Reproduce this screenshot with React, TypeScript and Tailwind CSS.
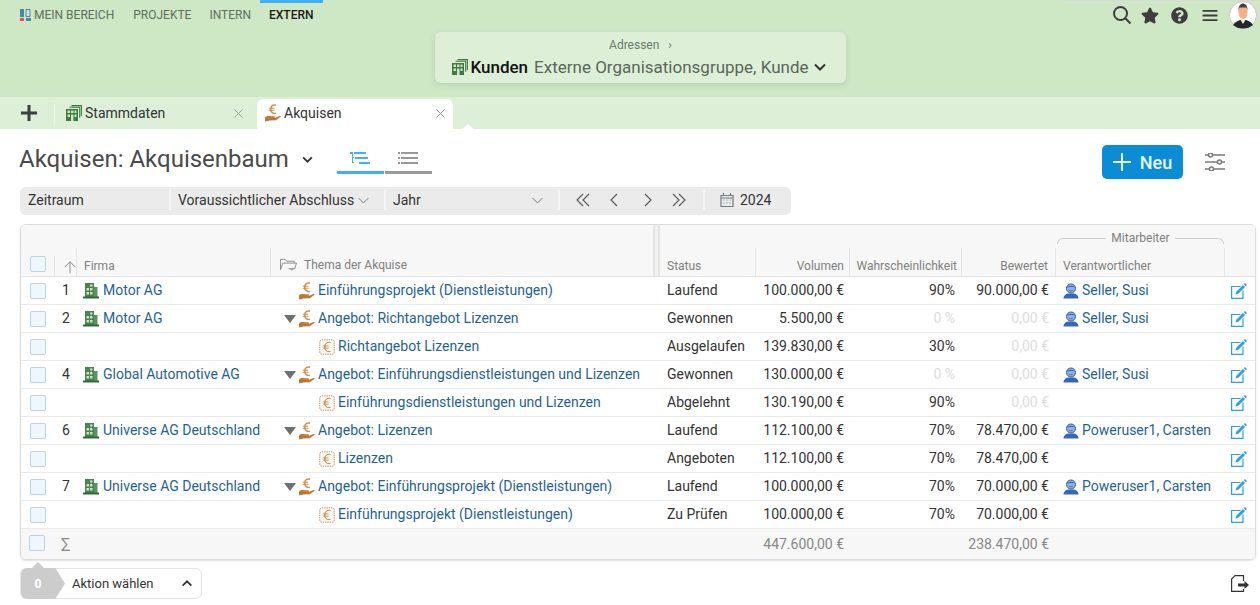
import { FaStar, FaQuestionCircle } from "react-icons/fa";

const gridCols = "grid-cols-[33px_22px_194px_382px_7px_96px_94px_112px_94px_169px_31px]";
const headCols = "grid-cols-[34px_22px_194px_382px_7px_96px_94px_112px_94px_169px_30px]";

type Row = {
  no?: string;
  firma?: string;
  thema: string;
  level: 0 | 1 | 2;
  status: string;
  vol: string;
  prob: string;
  score: string;
  owner?: string;
  muted?: boolean;
  mutedScore?: boolean;
};

const rows: Row[] = [
  { no: "1", firma: "Motor AG", thema: "Einführungsprojekt (Dienstleistungen)", level: 0, status: "Laufend", vol: "100.000,00 €", prob: "90%", score: "90.000,00 €", owner: "Seller, Susi" },
  { no: "2", firma: "Motor AG", thema: "Angebot: Richtangebot Lizenzen", level: 1, status: "Gewonnen", vol: "5.500,00 €", prob: "0 %", score: "0,00 €", owner: "Seller, Susi", muted: true, mutedScore: true },
  { thema: "Richtangebot Lizenzen", level: 2, status: "Ausgelaufen", vol: "139.830,00 €", prob: "30%", score: "0,00 €", mutedScore: true },
  { no: "4", firma: "Global Automotive AG", thema: "Angebot: Einführungsdienstleistungen und Lizenzen", level: 1, status: "Gewonnen", vol: "130.000,00 €", prob: "0 %", score: "0,00 €", owner: "Seller, Susi", muted: true, mutedScore: true },
  { thema: "Einführungsdienstleistungen und Lizenzen", level: 2, status: "Abgelehnt", vol: "130.190,00 €", prob: "90%", score: "0,00 €", mutedScore: true },
  { no: "6", firma: "Universe AG Deutschland", thema: "Angebot: Lizenzen", level: 1, status: "Laufend", vol: "112.100,00 €", prob: "70%", score: "78.470,00 €", owner: "Poweruser1, Carsten" },
  { thema: "Lizenzen", level: 2, status: "Angeboten", vol: "112.100,00 €", prob: "70%", score: "78.470,00 €" },
  { no: "7", firma: "Universe AG Deutschland", thema: "Angebot: Einführungsprojekt (Dienstleistungen)", level: 1, status: "Laufend", vol: "100.000,00 €", prob: "70%", score: "70.000,00 €", owner: "Poweruser1, Carsten" },
  { thema: "Einführungsprojekt (Dienstleistungen)", level: 2, status: "Zu Prüfen", vol: "100.000,00 €", prob: "70%", score: "70.000,00 €" },
];

function Check() {
  return <span className="block h-[16px] w-[16px] rounded-[2px] border border-[#b9d3e6] bg-[#eef7fd]" />;
}

function StackIcon({ className }: { className?: string }) {
  return (
    <svg viewBox="0 0 16 16" className={className}>
      <path d="M5.500.6H15.400V11M3.500 2.300H13.700V12.800" fill="none" stroke="#3f7a3f" strokeWidth="1.100" />
      <rect x="0" y="4" width="12" height="12" fill="#3f7a3f" />
      <path d="M1.500 5.500h2.500v2.500H1.500zM5 5.500h2.500v2.500H5zM8.500 5.500h2v2.500h-2zM1.500 9.500h2.500v2.500H1.500zM8.500 9.500h2v2.500h-2zM5 9.500h2.500v6.500H5z" fill="#cfe5c8" />
    </svg>
  );
}

function BuildingIcon() {
  return (
    <svg viewBox="0 0 16 16" className="h-[16px] w-[16px] shrink-0">
      <path d="M2 0h9v14H2z" fill="#4b8250" />
      <path d="M11 4h3.500v10H11z" fill="#5c9460" />
      <path d="M0 13.500h16V15.500H0z" fill="#2f6a35" />
      <path d="M3.500 5h2.500v2.500H3.500zM7 5h2.500v2.500H7zM3.500 9h2.500v2.500H3.500zM7 9h2.500v2.500H7zM7 1.500h2.500v2H7z" fill="#cfe2c8" />
    </svg>
  );
}

function HandEuroIcon({ className }: { className?: string }) {
  return (
    <svg viewBox="0 0 16 18" className={className ?? "h-[18px] w-[16px] shrink-0"}>
      <path d="M11 1.200C8 .300 5.800 2 5.800 5.200s2.200 4.900 5.200 4" fill="none" stroke="#d0914f" strokeWidth="1.600" />
      <path d="M3.800 4.200h5.700M3.800 6.300h5.700" stroke="#d0914f" strokeWidth="1.100" />
      <path d="M0 13.300c1.800-1.500 3.800-1.700 5.800-1.100h3.500c1.100 0 1.100 1.400 0 1.400H6.500l3.800.2 4.600-2.100c.8-.1 1.200.5.600 1.100l-4.500 3.400-7 .2-1.500.9H0z" fill="#b9793c" />
    </svg>
  );
}

function CertIcon() {
  return (
    <svg viewBox="0 0 16 16" className="h-[16px] w-[16px] shrink-0">
      <rect x="0.800" y="0.800" width="14.400" height="14.400" rx="2" fill="#fdf8f2" stroke="#c08a58" strokeWidth="1" strokeDasharray="1.400 .9" />
      <path d="M11.500 3.600C8 2.600 5.800 4.800 5.800 8s2.200 5.400 5.700 4.400" fill="none" stroke="#b9793c" strokeWidth="1" />
      <path d="M3.800 6.900h5.700M3.800 9.100h5.700" stroke="#b9793c" strokeWidth=".8" />
    </svg>
  );
}

function PersonIcon() {
  return (
    <svg viewBox="0 0 16 16" className="h-[16px] w-[16px] shrink-0">
      <path d="M.5 15.500c0-3 2.500-4.500 4.500-5h6c2 .5 4.500 2 4.500 5z" fill="#3668b4" />
      <circle cx="8" cy="5.500" r="4.500" fill="#8fb2e6" stroke="#2f5fa8" strokeWidth="1" />
      <path d="M3.500 4.500C5 2.500 11 2.500 12.500 4.500 11 3.800 5 3.800 3.500 4.500z" fill="#2f5fa8" />
      <path d="M6 7c1 1 3 1 4 0" stroke="#2f5fa8" strokeWidth=".7" fill="none" />
    </svg>
  );
}

function EditIcon() {
  return (
    <svg viewBox="0 0 16 16" className="h-[16px] w-[16px]">
      <path d="M9.500 3.500H.6V15.400H12V7.500" fill="none" stroke="#2f9fe8" strokeWidth="1.200" />
      <path d="M4.500 11.500l.8-2.800 6.700-6.700 2 2-6.700 6.700z" fill="#2f9fe8" />
      <path d="M12.800 1.200L14 0l2 2-1.200 1.200z" fill="#2f9fe8" />
    </svg>
  );
}

function Thin({ d, className }: { d: string; className?: string }) {
  return (
    <svg viewBox="0 0 16 16" className={className ?? "h-[16px] w-[16px]"} fill="none" stroke="currentColor" strokeWidth="1.100">
      <path d={d} />
    </svg>
  );
}

function Chevron({ className }: { className?: string }) {
  return (
    <svg viewBox="0 0 12 8" className={className ?? "h-[8px] w-[12px]"} fill="none" stroke="currentColor" strokeWidth="2">
      <path d="M1 1.500l5 5 5-5" />
    </svg>
  );
}

function Avatar() {
  return (
    <svg viewBox="0 0 28 28" className="h-[28px] w-[28px]">
      <circle cx="14" cy="14" r="13.500" fill="#fff" stroke="#c9c9c9" />
      <path d="M4 24c2-3 5-4 7-5h6c3 1 5 2 7 5-3 2.500-6 3.500-10 3.500S7 26.500 4 24z" fill="#23262b" />
      <path d="M11.500 19l2.500 4 2.500-4z" fill="#e4e4e4" />
      <path d="M9.500 8c0-3 2-5 4.500-5s4.500 2 4.500 5v4c0 3-2.500 6-4.500 6s-4.500-3-4.500-6z" fill="#f4b183" />
      <path d="M9.500 9c0-4 2-6.500 4.500-6.500s4.500 2.500 4.500 6.500l-1-2.500h-7z" fill="#3d4148" />
    </svg>
  );
}

function Header({ label, right, className }: { label: string; right?: boolean; className?: string }) {
  return (
    <div className={`flex h-[28px] items-center self-end border-r border-[#e6e6e6] pt-[8px] text-[12px] text-[#808080] ${right ? "justify-end pr-[4px]" : "pl-[7px]"} ${className ?? ""}`}>
      {label}
    </div>
  );
}

function TableRow({ row }: { row: Row }) {
  return (
    <div className={`grid h-[28px] ${gridCols} items-center border-b border-[#ebebeb] text-[14px] text-[#333]`}>
      <div className="pl-[9px]">
        <Check />
      </div>
      <div className="pl-[8px]">{row.no}</div>
      <div className="flex items-center gap-[2px] pl-[7px] text-[#1f6394]">
        {row.firma && <BuildingIcon />}
        {row.firma && <span className="whitespace-nowrap pl-[2px]">{row.firma}</span>}
      </div>
      <div className={`flex items-center text-[#1f6394] ${row.level === 2 ? "pl-[49px]" : row.level === 1 ? "pl-[14px]" : "pl-[29px]"}`}>
        {row.level === 1 && <span className="mr-[3px] h-0 w-0 border-x-[6px] border-t-[8px] border-x-transparent border-t-[#707070]" />}
        {row.level === 2 ? <CertIcon /> : <HandEuroIcon />}
        <span className="whitespace-nowrap pl-[3px]">{row.thema}</span>
      </div>
      <div />
      <div className="pl-[8px]">{row.status}</div>
      <div className="pr-[5px] text-right">{row.vol}</div>
      <div className={`pr-[6px] text-right ${row.muted ? "text-[#dcdcdc]" : ""}`}>{row.prob}</div>
      <div className={`pr-[6px] text-right ${row.mutedScore ? "text-[#dcdcdc]" : ""}`}>{row.score}</div>
      <div className="flex items-center pl-[8px] text-[#1f6394]">
        {row.owner && <PersonIcon />}
        {row.owner && <span className="whitespace-nowrap pl-[3px]">{row.owner}</span>}
      </div>
      <div className="flex justify-end pr-[8px]">
        <EditIcon />
      </div>
    </div>
  );
}

export default function App() {
  return (
    <div className="relative h-[605px] w-[1260px] overflow-hidden bg-white font-['Roboto',sans-serif]">
      <div className="absolute right-0 top-0 h-px w-[197px] bg-[#d9d9d9]" />
      <header className="h-[97px] bg-[#cee8c6]">
        <div className="flex h-[30px] items-start">
          <nav className="flex pl-[11px] text-[12px] uppercase text-[#5f6f5f]">
            <a className="mr-px flex items-center gap-[3px] px-[9px] pb-[7px] pt-[6px]">
              <svg viewBox="0 0 11 12" className="h-[12px] w-[11px]">
                <path d="M0 0h4v8H0z" fill="#4a86a8" />
                <path d="M0 9h4v3H0z" fill="#e0564e" />
                <path d="M6 .5h4v7H6z" fill="none" stroke="#4a86a8" />
                <path d="M6 9h5v3H6z" fill="#4a86a8" />
              </svg>
              Mein Bereich
            </a>
            <a className="px-[9px] pb-[7px] pt-[6px]">Projekte</a>
            <a className="px-[9px] pb-[7px] pt-[6px]">Intern</a>
            <a className="border-t-[3px] border-[#3fb0f5] px-[9px] pb-[7px] pt-[3px] font-medium text-[#1a1a1a]">Extern</a>
          </nav>
          <div className="ml-auto flex items-center pr-[3px] pt-px text-[#3d3d3d]">
            <svg viewBox="0 0 20 20" className="h-[20px] w-[20px]" fill="none" stroke="currentColor" strokeWidth="2">
              <circle cx="8.500" cy="8.500" r="6.500" />
              <path d="M13 13l5.500 5.500" />
            </svg>
            <FaStar className="ml-[9px] h-[17px] w-[18px]" />
            <FaQuestionCircle className="ml-[12px] h-[17px] w-[17px]" />
            <svg viewBox="0 0 16 14" className="ml-[14px] h-[13px] w-[16px]" fill="currentColor">
              <path d="M0 1h16v2H0zM0 6h16v2H0zM0 11h16v2H0z" />
            </svg>
            <div className="ml-[11px]">
              <Avatar />
            </div>
          </div>
        </div>
        <div className="ml-[435px] mt-[2px] h-[51px] w-[411px] rounded-[6px] bg-[#deefd8] pt-[6px] shadow-[0_2px_6px_rgba(90,130,90,0.2)]">
          <div className="flex justify-center gap-[9px] text-[12px] leading-[14px] text-[#6a7a6a]">
            <span>Adressen</span>
            <span>›</span>
          </div>
          <div className="mt-[4px] flex items-center justify-center pr-[3px] text-[17px] leading-[22px] text-[#5a665a]">
            <StackIcon className="mr-[2px] h-[16px] w-[16px]" />
            <span className="font-medium text-[#111]">Kunden</span>
            <span className="ml-[6px]">Externe Organisationsgruppe, Kunde</span>
            <Chevron className="ml-[5px] h-[8px] w-[12px] text-[#333]" />
          </div>
        </div>
      </header>

      <div className="flex h-[32px] items-end bg-[#deefd8]">
        <div className="flex h-[32px] w-[54px] items-center justify-center pl-[3px] text-[#3d3d3d]">
          <svg viewBox="0 0 16 16" className="h-[16px] w-[16px]" fill="currentColor">
            <path d="M6.500 0h3v6.500H16v3H9.500V16h-3V9.500H0v-3h6.500z" />
          </svg>
        </div>
        <div className="mb-[4px] h-[24px] w-px bg-[#eaf5e6]" />
        <div className="flex h-[30px] w-[202px] items-center pb-[2px] pl-[11px] pr-[12px] text-[14px] text-[#333]">
          <StackIcon className="h-[16px] w-[16px]" />
          <span className="pl-[3px]">Stammdaten</span>
          <Thin d="M3 3l10 10M13 3L3 13" className="ml-auto h-[13px] w-[13px] text-[#999]" />
        </div>
        <div className="flex h-[30px] w-[196px] items-center rounded-t-[6px] bg-white pb-[2px] pl-[8px] pr-[6px] text-[14px] text-[#333]">
          <HandEuroIcon className="h-[18px] w-[16px]" />
          <span className="pl-[3px]">Akquisen</span>
          <Thin d="M3 3l10 10M13 3L3 13" className="ml-auto h-[13px] w-[13px] text-[#888]" />
        </div>
        <div className="mb-0 ml-[9px] h-0 w-0 border-x-[6px] border-b-[5px] border-x-transparent border-b-white" />
      </div>

      <div className="flex h-[58px] items-start pl-[19px] pr-[35px]">
        <div className="flex items-center pt-[15px] text-[24px] leading-[30px] text-[#4a4a4a]">
          <h1>Akquisen: Akquisenbaum</h1>
          <Chevron className="ml-[13px] h-[7px] w-[11px] text-[#333]" />
        </div>
        <div className="ml-[24px] flex gap-px pt-[16px]">
          <div className="flex h-[29px] w-[47px] items-start justify-center border-b-[3px] border-[#3fb0f5] pt-[7px] text-[#3fb0f5]">
            <svg viewBox="0 0 20 13" className="h-[13px] w-[20px]" fill="currentColor">
              <path d="M0 0h3v2H0zM4 0h12v2H4zM2 2h1v9H2zM5 5h13v2H5zM3 5h1v1H3zM3 10h1v1H3zM9 10h11v2H9z" />
            </svg>
          </div>
          <div className="flex h-[29px] w-[47px] items-start justify-center border-b-[3px] border-[#999] pt-[7px] text-[#999]">
            <svg viewBox="0 0 20 13" className="h-[13px] w-[20px]" fill="currentColor">
              <path d="M0 0h2v2H0zM3 0h17v2H3zM0 5h2v2H0zM3 5h17v2H3zM0 10h2v2H0zM3 10h17v2H3z" />
            </svg>
          </div>
        </div>
        <div className="ml-auto flex items-center gap-[22px] pt-[16px]">
          <button className="flex h-[34px] w-[81px] items-center justify-center gap-[9px] rounded-[5px] bg-[#0a8dd4] text-[18px] font-medium text-[#e8f6ff]">
            <svg viewBox="0 0 18 18" className="h-[18px] w-[18px]" fill="none" stroke="currentColor" strokeWidth="2">
              <path d="M9 0v18M0 9h18" />
            </svg>
            Neu
          </button>
          <svg viewBox="0 0 20 18" className="h-[18px] w-[20px]" fill="none" stroke="#7a7a7a" strokeWidth="1.500">
            <path d="M0 2h3M8 2h12M0 9h12M17 9h3M0 16h4M9 16h11" />
            <circle cx="5.500" cy="2" r="2" />
            <circle cx="14.500" cy="9" r="2" />
            <circle cx="6.500" cy="16" r="2" />
          </svg>
        </div>
      </div>

      <div className="ml-[20px] flex h-[28px] w-[771px] items-center rounded-[6px] bg-[#ebebeb] pb-[2px] text-[14px] text-[#333]">
        <div className="w-[149px] pl-[8px]">Zeitraum</div>
        <div className="flex h-[20px] w-[215px] items-center border-l-2 border-[#f5f5f5] pl-[7px]">
          Voraussichtlicher Abschluss
          <Thin d="M2 5l6 6 6-6" className="ml-[3px] h-[13px] w-[13px] text-[#5f7080]" />
        </div>
        <div className="flex h-[20px] w-[174px] items-center border-l-2 border-[#f5f5f5] pl-[7px]">
          Jahr
          <Thin d="M2 5l6 6 6-6" className="ml-auto mr-[14px] h-[13px] w-[13px] text-[#5f7080]" />
        </div>
        <div className="flex h-[20px] w-[145px] items-center gap-[16px] border-l-2 border-[#f5f5f5] pl-[15px] text-[#555]">
          <Thin d="M8 2L2 8l6 6M14 2L8 8l6 6" />
          <Thin d="M10 2L4 8l6 6" />
          <Thin d="M6 2l6 6-6 6" />
          <Thin d="M2 2l6 6-6 6M8 2l6 6-6 6" />
        </div>
        <div className="flex h-[20px] items-center gap-[6px] border-l-2 border-[#f5f5f5] pl-[15px]">
          <svg viewBox="0 0 14 14" className="h-[14px] w-[14px]" fill="none" stroke="#6b7c8a" strokeWidth="1.200">
            <path d="M1 2.500h12v11H1zM1 5h12M3.500 0v3M10.500 0v3" />
            <path d="M3.500 7h1.500M6.500 7h1.500M9.500 7h1.500M3.500 10h1.500M6.500 10h1.500M9.500 10h1.500" strokeDasharray="1 .5" />
          </svg>
          2024
        </div>
      </div>

      <div className="ml-[20px] mt-[9px] h-[336px] w-[1236px] overflow-hidden rounded-[6px] border border-[#dcdcdc] shadow-[0_1px_2px_rgba(0,0,0,0.12)]">
        <div className={`relative grid h-[52px] ${headCols} border-b border-[#e4e4e4] bg-[#f7f7f7]`}>
          <div className="flex items-end self-end border-r border-[#e6e6e6] pb-[4px] pl-[9px]">
            <Check />
          </div>
          <div className="flex h-[28px] items-end justify-end self-end border-r border-[#e6e6e6] pb-[2px] text-[#888]">
            <Thin d="M8 15V2M2 8l6-6 6 6" className="-mr-px h-[14px] w-[14px]" />
          </div>
          <Header label="Firma" />
          <div className="flex h-[28px] items-center self-end pl-[9px] pt-[6px] text-[12px] text-[#808080]">
            <svg viewBox="0 0 18 14" className="mr-[7px] h-[14px] w-[17px]" fill="none" stroke="#888" strokeWidth="1">
              <path d="M.5 12V1h5l1.500 2h8v2M.5 12L3 5h14.500l-2 6H9" />
              <path d="M11 11l1.500 1.500 2-2.500" />
            </svg>
            Thema der Akquise
          </div>
          <div className="h-full border-x-[2px] border-[#e4e4e4] bg-[#f1f1f1]" />
          <Header label="Status" />
          <Header label="Volumen" right className="pr-[5px]" />
          <Header label="Wahrscheinlichkeit" right />
          <Header label="Bewertet" right className="pr-[7px]" />
          <div className="relative self-end">
            <div className="absolute inset-x-[1px] -top-[17px] flex items-start">
              <div className="mt-[7px] h-[6px] flex-1 rounded-tl-[6px] border-l border-t border-[#cfcfcf]" />
              <span className="px-[5px] text-[12px] leading-[14px] text-[#808080]">Mitarbeiter</span>
              <div className="mt-[7px] h-[6px] flex-1 rounded-tr-[6px] border-r border-t border-[#cfcfcf]" />
            </div>
            <Header label="Verantwortlicher" />
          </div>
          <div />
        </div>
        {rows.map((r, i) => (
          <TableRow key={i} row={r} />
        ))}
        <div className={`grid h-[31px] ${gridCols} items-center bg-[#f7f7f7] text-[14px] text-[#888]`}>
          <div className="pb-[3px] pl-[8px]">
            <Check />
          </div>
          <div className="pl-[7px] text-[15px]">∑</div>
          <div />
          <div />
          <div />
          <div />
          <div className="pr-[5px] text-right">447.600,00 €</div>
          <div />
          <div className="pr-[6px] text-right">238.470,00 €</div>
          <div />
          <div />
        </div>
      </div>

      <div className="flex items-center pl-[20px] pr-[11px] pt-[8px]">
        <div className="relative flex h-[31px] w-[182px] items-center rounded-[6px] border border-[#e4e4e4] text-[13px] text-[#333]">
          <span className="absolute -top-[7px] left-[10px] h-0 w-0 border-x-[7px] border-b-[7px] border-x-transparent border-b-[#cccccc]" />
          <div className="flex h-[31px] w-[44px] items-center justify-center rounded-l-[6px] bg-[#cccccc] pr-[10px] text-[12px] font-bold text-white [clip-path:polygon(0_0,78%_0,100%_50%,78%_100%,0_100%)]">
            0
          </div>
          <span className="pl-[7px]">Aktion wählen</span>
          <Chevron className="ml-auto mr-[8px] h-[7px] w-[12px] rotate-180 text-[#333]" />
        </div>
        <svg viewBox="0 0 18 17" className="ml-auto h-[17px] w-[18px]" fill="none" stroke="#333" strokeWidth="1.200">
          <path d="M12.500 6V.6H4L.6 4V16.400H12.500V14" />
          <path d="M7 8.500h6.500V6l4.500 4-4.500 4V11.500H7z" fill="#333" stroke="none" />
        </svg>
      </div>
    </div>
  );
}
